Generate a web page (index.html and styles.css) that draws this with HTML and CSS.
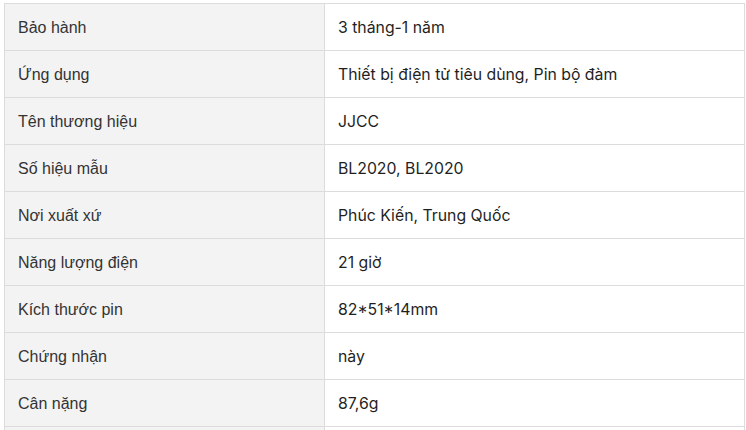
FILE: index.html
```html
<!DOCTYPE html>
<html lang="vi">
<head>
<meta charset="utf-8">
<link rel="stylesheet" href="styles.css">
</head>
<body>
<table class="spec">
  <tbody>
    <tr><td class="k">Bảo hành</td><td class="v">3 tháng-1 năm</td></tr>
    <tr><td class="k">Ứng dụng</td><td class="v">Thiết bị điện tử tiêu dùng, Pin bộ đàm</td></tr>
    <tr><td class="k">Tên thương hiệu</td><td class="v">JJCC</td></tr>
    <tr><td class="k">Số hiệu mẫu</td><td class="v">BL2020, BL2020</td></tr>
    <tr><td class="k">Nơi xuất xứ</td><td class="v">Phúc Kiến, Trung Quốc</td></tr>
    <tr><td class="k">Năng lượng điện</td><td class="v">21 giờ</td></tr>
    <tr><td class="k">Kích thước pin</td><td class="v">82*51*14mm</td></tr>
    <tr><td class="k">Chứng nhận</td><td class="v">này</td></tr>
    <tr><td class="k">Cân nặng</td><td class="v">87,6g</td></tr>
    <tr><td class="k">&nbsp;</td><td class="v">&nbsp;</td></tr>
  </tbody>
</table>
</body>
</html>
```
FILE: styles.css
```css
html, body {
  margin: 0;
  background: #fff;
}
body {
  padding: 3px 0 0 4px;
  font-family: Inter, "Noto Sans", sans-serif;
  font-size: 15.8px;
  color: #1f1f1f;
}
.spec {
  border-collapse: collapse;
  width: 741px;
  table-layout: fixed;
}
.spec td {
  border: 1px solid #dcdcdc;
  height: 47px;
  padding: 2px 13px 0;
  box-sizing: border-box;
  line-height: 20px;
  vertical-align: middle;
}
.spec .k {
  width: 320px;
  background: #f3f3f3;
  color: #333;
  font-family: "Liberation Sans", Arial, sans-serif;
  font-size: 16px;
}
.spec .v {
  background: #fff;
}
```
